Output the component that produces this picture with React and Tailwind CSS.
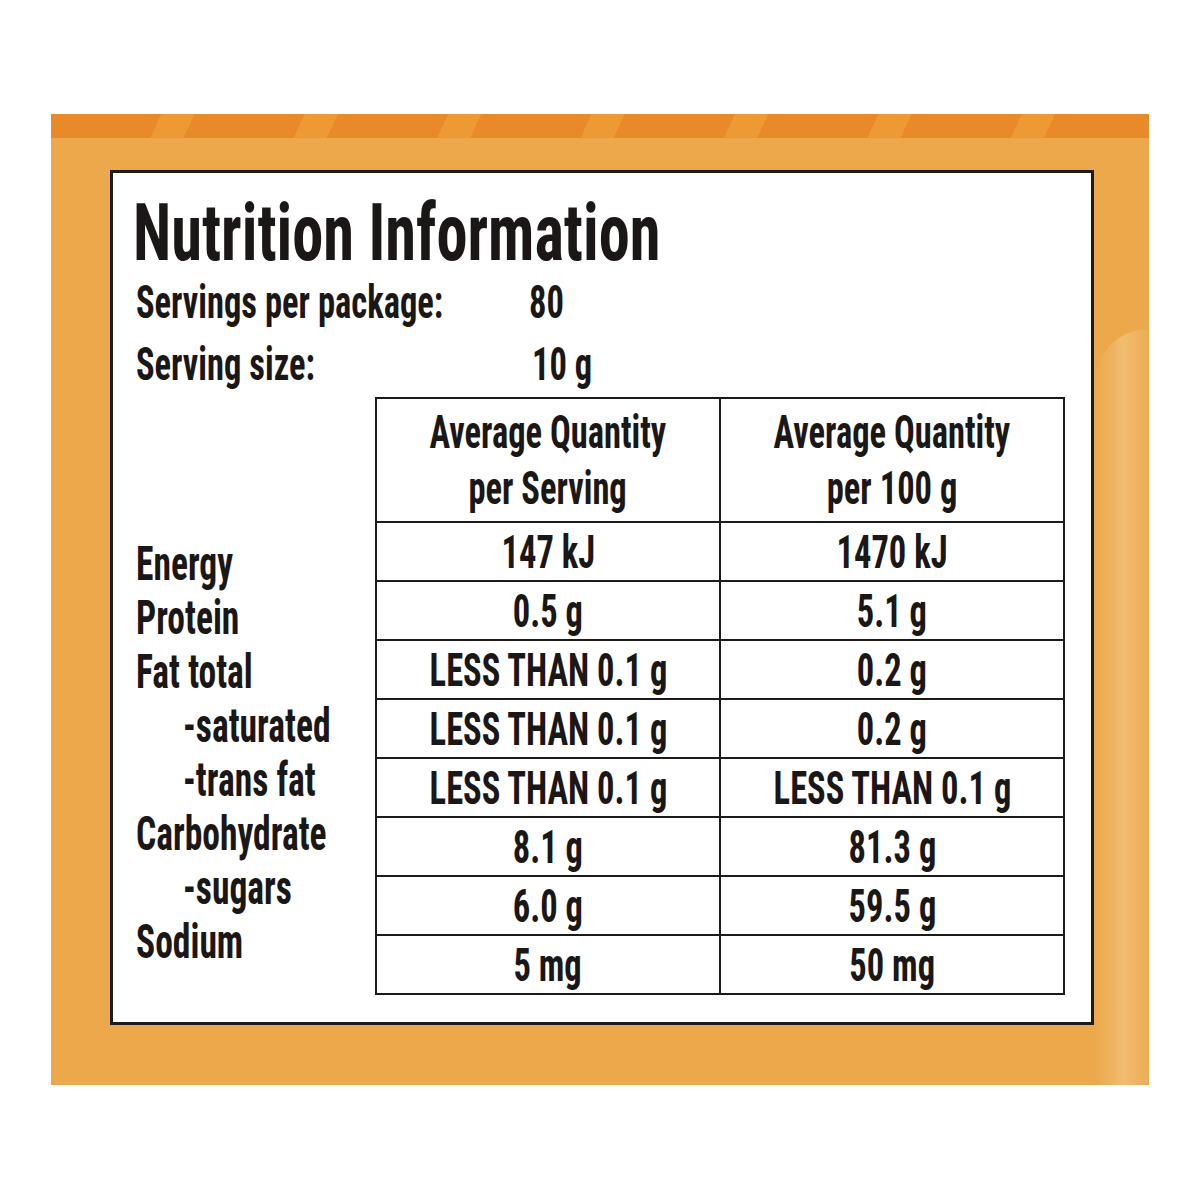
import React from "react";

const labels = [
  { text: "Energy", indent: false },
  { text: "Protein", indent: false },
  { text: "Fat total", indent: false },
  { text: "-saturated", indent: true },
  { text: "-trans fat", indent: true },
  { text: "Carbohydrate", indent: false },
  { text: "-sugars", indent: true },
  { text: "Sodium", indent: false },
];

const rows = [
  ["147 kJ", "1470 kJ"],
  ["0.5 g", "5.1 g"],
  ["LESS THAN 0.1 g", "0.2 g"],
  ["LESS THAN 0.1 g", "0.2 g"],
  ["LESS THAN 0.1 g", "LESS THAN 0.1 g"],
  ["8.1 g", "81.3 g"],
  ["6.0 g", "59.5 g"],
  ["5 mg", "50 mg"],
];

// squeezes Roboto Condensed a little more, the label face is very narrow
const Narrow = ({ children, left }) => (
  <span className={`inline-block whitespace-nowrap scale-x-[0.75] ${left ? "origin-left" : "origin-center"}`}>
    {children}
  </span>
);

export default function App() {
  return (
    <div className="w-[1200px] h-[1200px] bg-white pt-[114px] pl-[51px] font-['Roboto_Condensed',Roboto,sans-serif] font-bold text-[#1c1717]">
      <div className="relative w-[1098px] h-[971px] bg-[#eca84b] overflow-hidden">
        {/* striped top band */}
        <div className="h-[24px] bg-[repeating-linear-gradient(115deg,#e8892a_0px,#e8892a_100px,#ed9a34_100px,#ed9a34_130px)]" />
        {/* soft highlight on the right edge */}
        <div className="absolute right-0 top-[215px] w-[54px] h-[756px] pointer-events-none bg-[linear-gradient(90deg,rgba(255,235,200,0)_0%,rgba(255,235,200,0.3)_55%,rgba(255,235,200,0.05)_100%)] rounded-tl-[54px]" />

        <div className="ml-[59px] mt-[32px] w-[984px] h-[855px] bg-white border-[3px] border-[#1f1a1a] pl-[20px]">
          <h1 className="text-[80px] leading-[76px] mt-[22px]">
            <span className="inline-block whitespace-nowrap scale-x-[0.78] origin-left">Nutrition Information</span>
          </h1>

          <div className="text-[46px] leading-[62px] pl-[3px]">
            <div className="flex">
              <div className="w-[393px]"><Narrow left>Servings per package:</Narrow></div>
              <div><Narrow left>80</Narrow></div>
            </div>
            <div className="flex">
              <div className="w-[396px]"><Narrow left>Serving size:</Narrow></div>
              <div><Narrow left>10 g</Narrow></div>
            </div>
          </div>

          <div className="flex mt-[2px]">
            <div className="w-[242px] pt-[140px] pl-[3px] text-[48px] leading-[54px]">
              {labels.map((l, i) => (
                <div key={i} className={l.indent ? "pl-[47px]" : ""}>
                  <span className="inline-block whitespace-nowrap scale-x-[0.74] origin-left">{l.text}</span>
                </div>
              ))}
            </div>

            <table className="w-[690px] border-collapse border-2 border-[#1f1a1a] text-[46px] text-center">
              <thead>
                <tr className="h-[124px]">
                  <th className="w-1/2 border-2 border-[#1f1a1a] leading-[56px] font-bold">
                    <Narrow>Average Quantity</Narrow>
                    <br />
                    <Narrow>per Serving</Narrow>
                  </th>
                  <th className="w-1/2 border-2 border-[#1f1a1a] leading-[56px] font-bold">
                    <Narrow>Average Quantity</Narrow>
                    <br />
                    <Narrow>per 100 g</Narrow>
                  </th>
                </tr>
              </thead>
              <tbody>
                {rows.map((r, i) => (
                  <tr key={i} className="h-[59px]">
                    <td className="border-2 border-[#1f1a1a] leading-[56px] p-0">
                      <Narrow>{r[0]}</Narrow>
                    </td>
                    <td className="border-2 border-[#1f1a1a] leading-[56px] p-0">
                      <Narrow>{r[1]}</Narrow>
                    </td>
                  </tr>
                ))}
              </tbody>
            </table>
          </div>
        </div>
      </div>
    </div>
  );
}
